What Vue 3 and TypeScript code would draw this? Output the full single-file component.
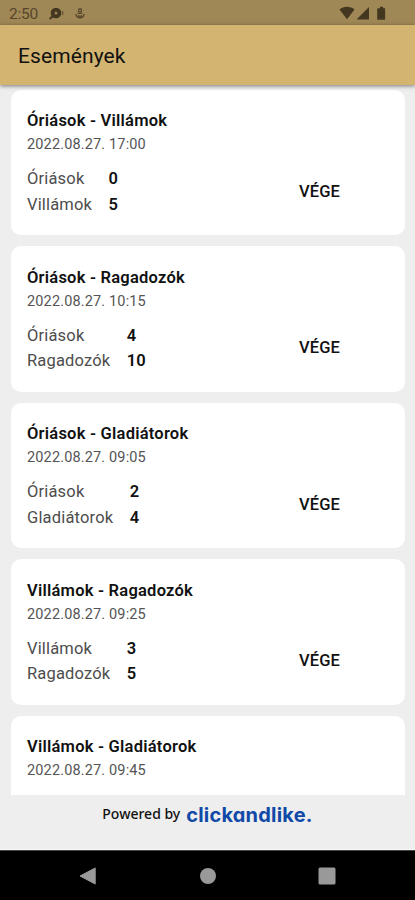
<script setup lang="ts">
interface Side {
  name: string
  score?: number
}
interface MatchEvent {
  title: string
  date: string
  sides: Side[]
}

const events: MatchEvent[] = [
  { title: 'Óriások - Villámok', date: '2022.08.27. 17:00', sides: [{ name: 'Óriások', score: 0 }, { name: 'Villámok', score: 5 }] },
  { title: 'Óriások - Ragadozók', date: '2022.08.27. 10:15', sides: [{ name: 'Óriások', score: 4 }, { name: 'Ragadozók', score: 10 }] },
  { title: 'Óriások - Gladiátorok', date: '2022.08.27. 09:05', sides: [{ name: 'Óriások', score: 2 }, { name: 'Gladiátorok', score: 4 }] },
  { title: 'Villámok - Ragadozók', date: '2022.08.27. 09:25', sides: [{ name: 'Villámok', score: 3 }, { name: 'Ragadozók', score: 5 }] },
  { title: 'Villámok - Gladiátorok', date: '2022.08.27. 09:45', sides: [] },
]
</script>

<template>
  <div class="screen">
    <div class="status">
      <span class="clock">2:50</span>
      <svg class="notif" width="16" height="14" viewBox="0 0 16 14">
        <path d="M1.2 11.4 4 9" stroke="#43371f" stroke-width="2" stroke-linecap="round" />
        <circle cx="7" cy="6" r="5.3" fill="#43371f" />
        <circle cx="7" cy="6" r="1.5" fill="#9b8352" />
        <path d="M13.4 4.2a4.5 4.5 0 0 1 0 3.8" fill="none" stroke="#6b5936" stroke-width="1.4" />
      </svg>
      <svg class="person" width="10" height="12" viewBox="0 0 10 12" fill="none" stroke="#5c4b2e" stroke-width="1.4">
        <circle cx="5" cy="2.3" r="1.6" />
        <path d="M2.600 5.300h4.800M1 6c0 5 8 5 8 0M3.200 7.200 5 9l1.800-1.800" />
      </svg>
      <svg class="signals" width="48" height="16" viewBox="0 0 48 16" fill="#43371f">
        <path d="M.5 3.500C4.500-.2 11.500-.2 15.500 3.500L8 13.300z" />
        <path d="M30 1v12.500H17.500z" />
        <path d="M39 2.200h2V.7h3.200v1.500h1.900v11.600H38.200V3z" />
      </svg>
    </div>

    <header class="appbar"><h1>Események</h1></header>

    <main class="list">
      <article v-for="event in events" :key="event.title" class="card">
        <h2>{{ event.title }}</h2>
        <p class="date">{{ event.date }}</p>
        <div v-if="event.sides.length" class="result">
          <div class="scores">
            <template v-for="side in event.sides" :key="side.name">
              <span class="team">{{ side.name }}</span>
              <span class="score">{{ side.score }}</span>
            </template>
          </div>
          <div class="state">VÉGE</div>
        </div>
      </article>
    </main>

    <footer class="powered">
      <span class="by">Powered by</span>
      <span class="brand">clickandlike.</span>
    </footer>

    <nav class="navbar">
      <svg width="18" height="18" viewBox="0 0 18 18"><path d="M16.200 1v16L1 9z" fill="#999" stroke="#999" stroke-linejoin="round" /></svg>
      <svg width="18" height="18" viewBox="0 0 18 18"><circle cx="9" cy="9" r="8" fill="#999" /></svg>
      <svg width="18" height="18" viewBox="0 0 18 18"><rect x=".5" y=".5" width="17" height="17" rx="1.500" fill="#999" /></svg>
    </nav>
  </div>
</template>

<style>
body {
  margin: 0;
}
</style>

<style scoped>
.screen {
  display: flex;
  flex-direction: column;
  width: 415px;
  height: 900px;
  overflow: hidden;
  background: #eee;
  font-family: Roboto, sans-serif;
  color: #111;
}
.status {
  display: flex;
  align-items: center;
  flex: none;
  box-sizing: border-box;
  height: 25px;
  padding: 2px 28px 0 9px;
  background: #a08756;
}
.clock {
  width: 29px;
  font-size: 15.5px;
  line-height: 20px;
  letter-spacing: -0.2px;
  color: #55462b;
}
.notif {
  margin-left: 11px;
}
.person {
  margin-left: 10px;
}
.signals {
  margin-left: auto;
}
.appbar {
  position: relative;
  flex: none;
  display: flex;
  align-items: center;
  height: 60px;
  padding-left: 18px;
  background: #d3b571;
  box-shadow: 0 1px 4px rgba(0, 0, 0, 0.5);
}
h1 {
  margin: 2px 0 0;
  font-size: 21px;
  font-weight: 400;
  line-height: 28px;
  letter-spacing: 0.1px;
}
.list {
  flex: none;
  display: flex;
  flex-direction: column;
  gap: 11px;
  box-sizing: border-box;
  height: 710px;
  padding: 4.6px 10.5px 0 11px;
  overflow: hidden;
}
.card {
  flex: none;
  box-sizing: border-box;
  height: 145.5px;
  padding: 20.9px 16px 0;
  border-radius: 10px;
  background: #fff;
}
h2 {
  margin: 0;
  font-size: 16.5px;
  font-weight: 600;
  line-height: 22px;
  letter-spacing: 0.23px;
}
.date {
  margin: 3px 0 0;
  font-size: 14.5px;
  line-height: 20px;
  letter-spacing: 0.15px;
  color: #555;
}
.result {
  display: grid;
  grid-template-columns: 1fr 138px;
  margin-top: 11px;
}
.scores {
  display: grid;
  grid-template-columns: max-content max-content;
  column-gap: 16.4px;
  font-size: 16.5px;
  line-height: 25.3px;
  justify-content: start;
}
.team {
  color: #4d4d4d;
  letter-spacing: 0.17px;
}
.score {
  font-weight: 600;
}
.state {
  align-self: center;
  justify-self: center;
  font-size: 16.5px;
  font-weight: 500;
  line-height: 22px;
  letter-spacing: 0.15px;
}
.powered {
  flex: none;
  display: flex;
  justify-content: center;
  gap: 6px;
  box-sizing: border-box;
  height: 55px;
  padding-top: 7px;
  border-bottom: 1px solid #fafafa;
}
.by {
  font-family: 'Noto Sans', sans-serif;
  font-size: 14px;
  font-weight: 500;
  line-height: 24px;
}
.brand {
  padding-top: 1px;
  font-family: Inter, sans-serif;
  font-size: 20px;
  font-weight: 700;
  font-feature-settings: 'cv11' 1;
  line-height: 24px;
  letter-spacing: 0.2px;
  color: #1149a8;
}
.navbar {
  flex: none;
  display: flex;
  justify-content: space-between;
  align-items: center;
  box-sizing: border-box;
  height: 50px;
  padding: 0 79px;
  background: #000;
  border-top: 1px solid #444;
}
</style>
